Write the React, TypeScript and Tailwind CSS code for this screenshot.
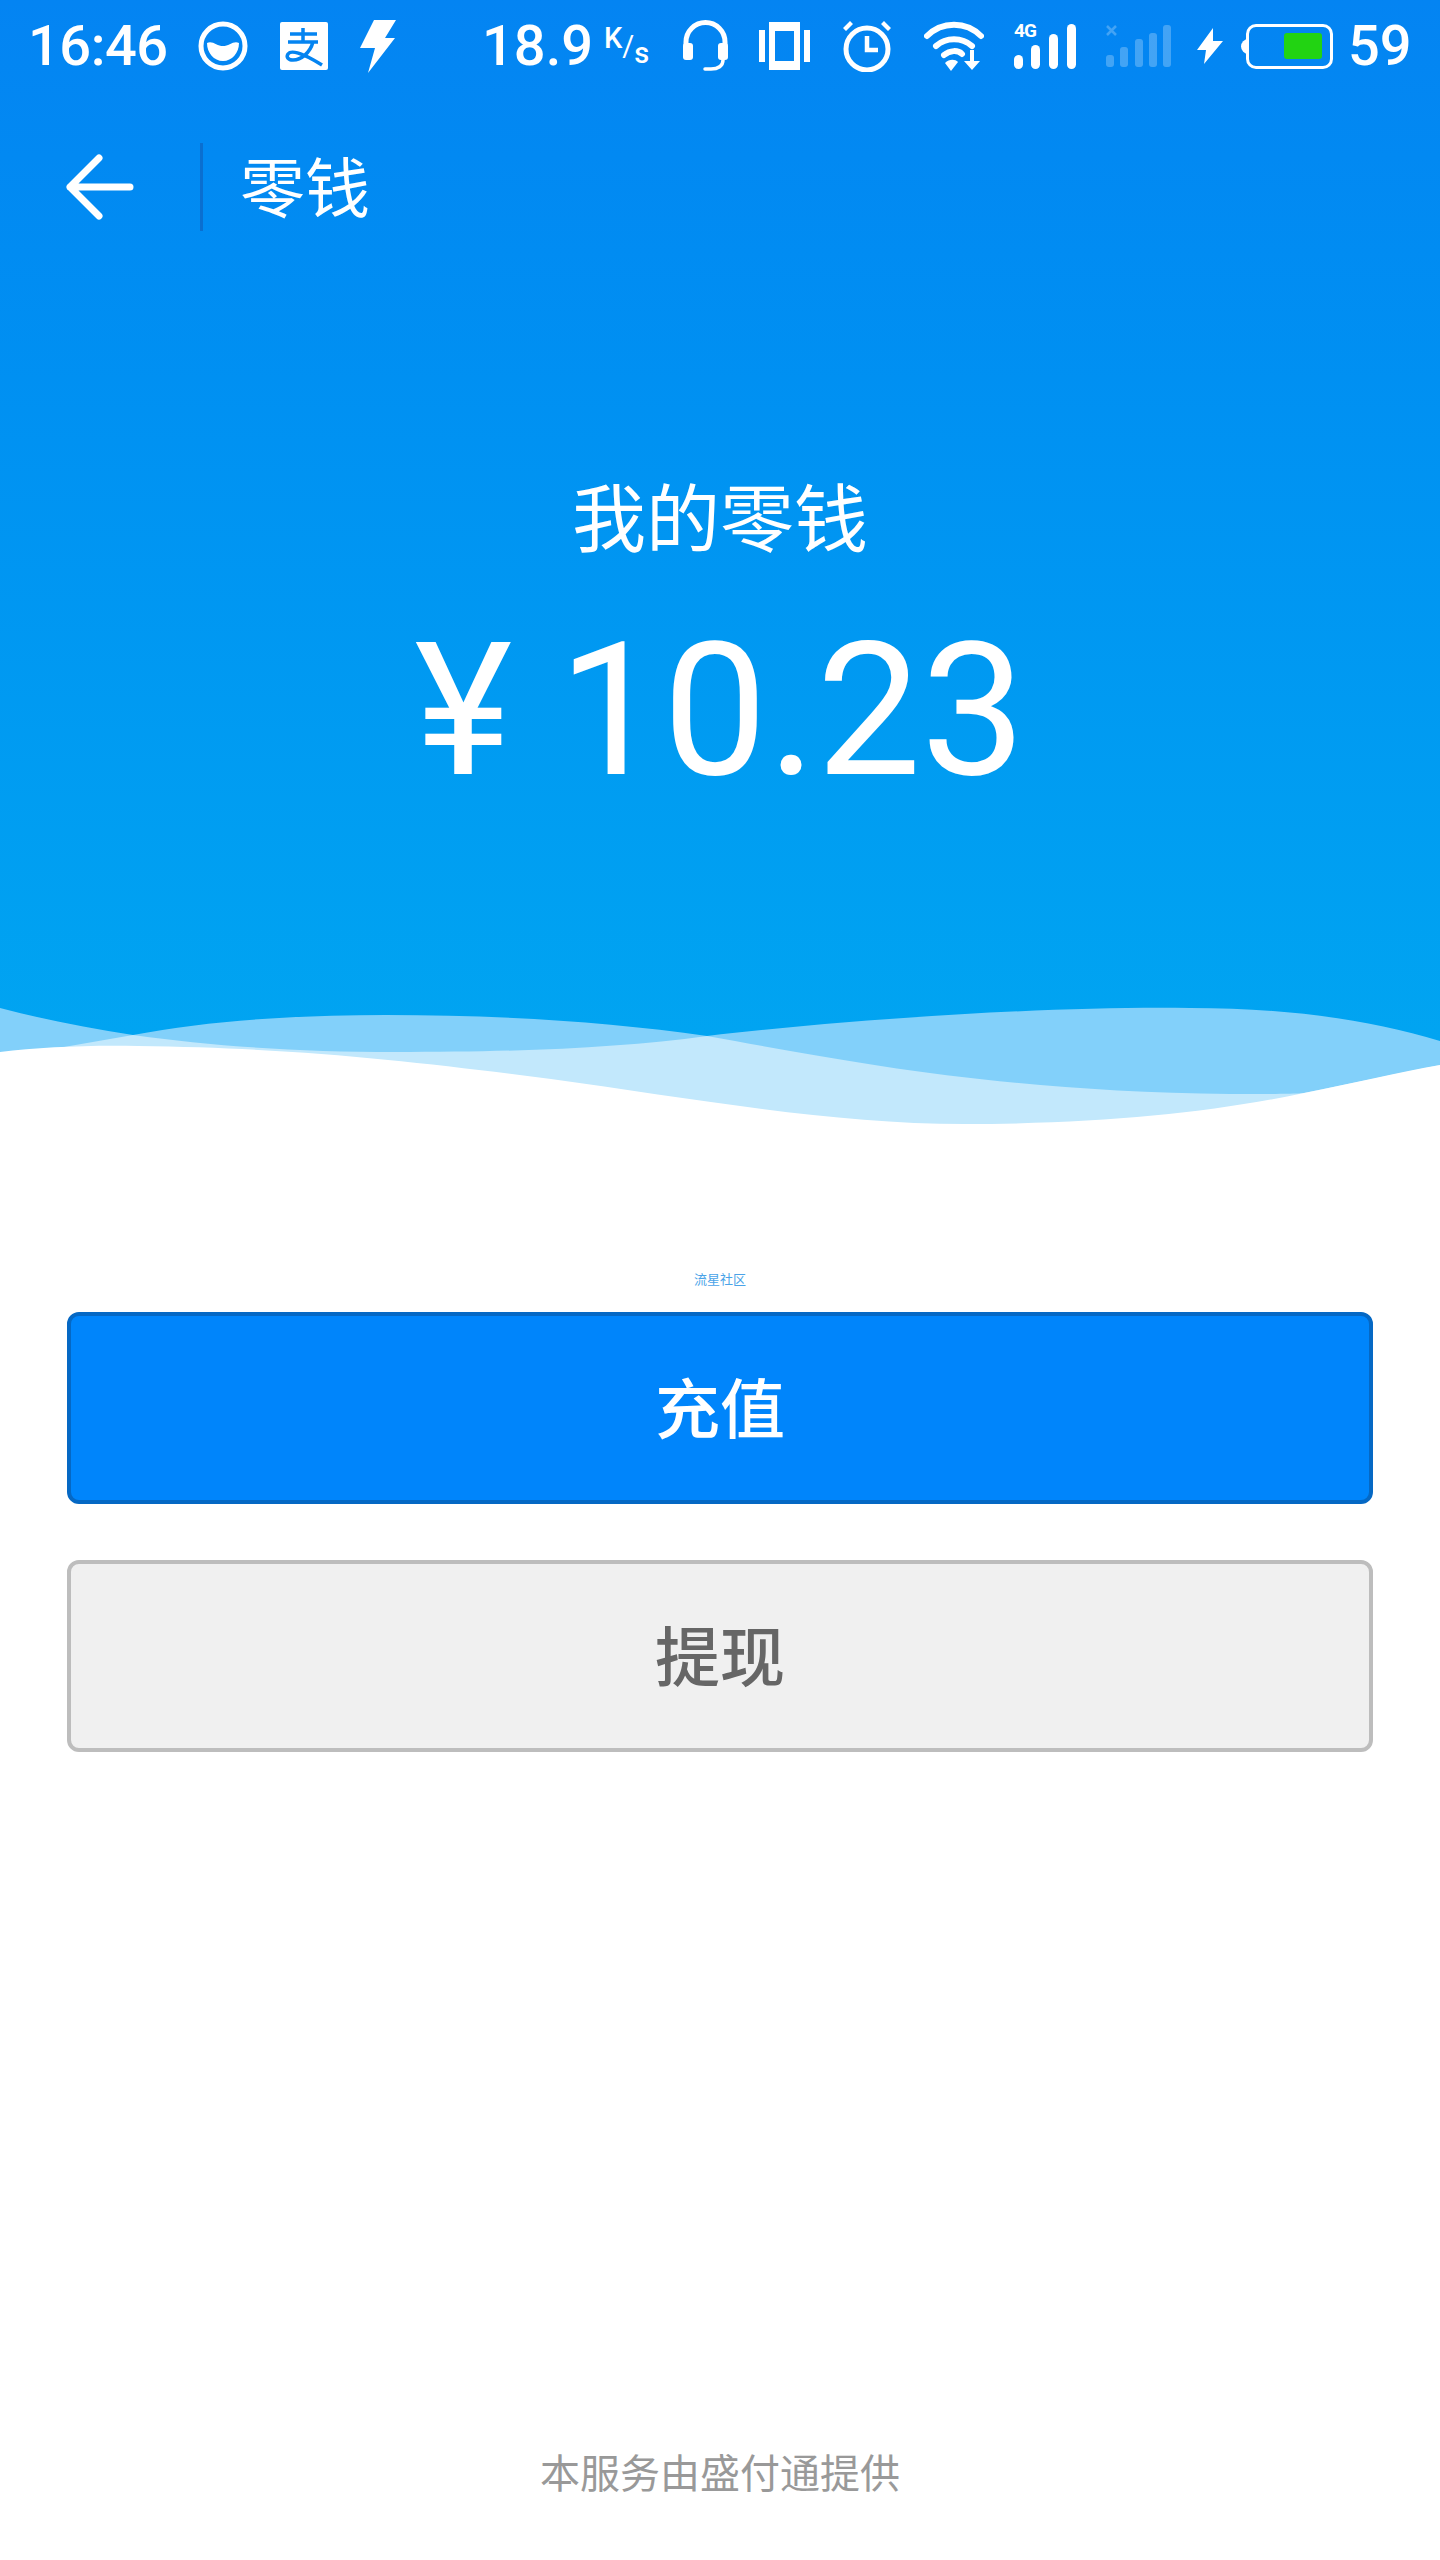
const CJK = '[font-family:Roboto,"Noto_Sans_CJK_SC",sans-serif]';

function StatusIcons() {
  return (
    <>
      {/* round app icon */}
      <svg width="50" height="52" viewBox="0 0 50 52" className="ml-[30px]">
        <circle cx="25" cy="26" r="22" fill="none" stroke="#fff" strokeWidth="5" />
        <path d="M9 23c5-3 10 3 16 3s11-6 16-3c0 10-7 18-16 18S9 33 9 23z" fill="#fff" />
      </svg>
      {/* alipay */}
      <svg width="48" height="48" viewBox="0 0 48 48" className="ml-[32px]">
        <path d="M2 0h44a2 2 0 0 1 2 2v44a2 2 0 0 1-2 2H2a2 2 0 0 1-2-2V2a2 2 0 0 1 2-2z" fill="#fff" />
        <path d="M23 6v13M10 12h27M8 20h30M33 20c-3 11-12 18-20 18-5 0-7-3-5-6 3-4 13-2 34 11" fill="none" stroke="#0484f1" strokeWidth="3.5" />
      </svg>
      {/* bolt */}
      <svg width="36" height="53" viewBox="0 0 36 53" className="ml-[32px]">
        <path d="M14 0h22L25 18h10L8 53l7-25H0z" fill="#fff" />
      </svg>
    </>
  );
}

function RightIcons() {
  return (
    <>
      {/* headset */}
      <svg width="49" height="54" viewBox="0 0 49 54" className="ml-[29px]">
        <path d="M5 26V23a19.500 19.500 0 0 1 39 0v3" fill="none" stroke="#fff" strokeWidth="5" />
        <rect x="2" y="24" width="10" height="17" rx="3" fill="#fff" />
        <rect x="37" y="24" width="10" height="17" rx="3" fill="#fff" />
        <path d="M42 41c0 6-5 9-12 9h-6" fill="none" stroke="#fff" strokeWidth="3.500" strokeLinecap="round" />
      </svg>
      {/* vibrate */}
      <svg width="51" height="48" viewBox="0 0 51 48" className="ml-[29px]">
        <path d="M10 0h31v48H10zM16 9v30h19V9z" fill="#fff" fillRule="evenodd" />
        <rect x="0" y="8" width="6" height="32" fill="#fff" />
        <rect x="45" y="8" width="6" height="32" fill="#fff" />
      </svg>
      {/* alarm */}
      <svg width="50" height="52" viewBox="0 0 50 52" className="ml-[32px]">
        <circle cx="25" cy="29" r="21" fill="none" stroke="#fff" strokeWidth="5" />
        <path d="M25 16v14h11" fill="none" stroke="#fff" strokeWidth="4.5" />
        <path d="M1 8l7-7 3 3-7 7zM49 8l-7-7-3 3 7 7z" fill="#fff" />
      </svg>
      {/* wifi */}
      <svg width="60" height="50" viewBox="0 0 60 50" className="ml-[32px]">
        <path d="M3 15c15-15 39-15 54 0M12 25c10-9 26-9 36 0M20 34c6-5 14-5 18-1" fill="none" stroke="#fff" strokeWidth="6" strokeLinecap="round" />
        <path d="M21 42c4-4 10-4 13-1l-7 9z" fill="#fff" />
        <path d="M50 29v11h6l-8 9-8-9h6V29z" fill="#fff" />
      </svg>
      {/* 4G signal */}
      <div className="relative ml-[30px] h-[45px] w-[62px]">
        <span className="absolute top-[-2px] left-0 font-['Roboto'] text-[19px] leading-[18px] font-bold tracking-[-1px] text-white">4G</span>
        <svg width="62" height="45" viewBox="0 0 62 45" className="block">
          <rect x="0" y="31" width="9" height="14" rx="4.5" fill="#fff" />
          <rect x="17" y="21" width="9" height="24" rx="4.5" fill="#fff" />
          <rect x="35" y="10" width="9" height="35" rx="4.5" fill="#fff" />
          <rect x="53" y="0" width="9" height="45" rx="4.5" fill="#fff" />
        </svg>
      </div>
      {/* empty sim signal */}
      <svg width="65" height="42" viewBox="0 0 65 42" className="ml-[30px] opacity-25">
        <path d="M1 1l9 9M10 1l-9 9" stroke="#fff" strokeWidth="2.5" />
        <rect x="0" y="30" width="8" height="12" rx="3" fill="#fff" />
        <rect x="14" y="22" width="8" height="20" rx="3" fill="#fff" />
        <rect x="29" y="14" width="8" height="28" rx="3" fill="#fff" />
        <rect x="43" y="8" width="8" height="34" rx="3" fill="#fff" />
        <rect x="57" y="0" width="8" height="42" rx="3" fill="#fff" />
      </svg>
      {/* charging */}
      <svg width="26" height="36" viewBox="0 0 26 36" className="ml-[26px]">
        <path d="M16 0L0 22h9L7 36 26 13h-10z" fill="#fff" />
      </svg>
      {/* battery */}
      <div className="relative ml-[18px] flex h-[45px] w-[92px] items-center">
        <div className="absolute top-[15px] left-0 h-[15px] w-[8px] rounded-l-full bg-white" />
        <div className="ml-[5px] flex h-full flex-1 items-center justify-end rounded-[10px] border-[3px] border-white pr-[8px]">
          <div className="h-[26px] w-[38px] rounded-[3px] bg-[#22d312]" />
        </div>
      </div>
    </>
  );
}

function Wave() {
  return (
    <svg viewBox="0 0 1440 130" preserveAspectRatio="none" className="absolute right-0 bottom-0 left-0 h-[130px] w-full">
      <path
        d="M0 8C45 20 90 28 133 35C210 20 300 15 386 15C500 15 610 22 707 36C860 18 1060 6 1190 8C1290 8 1370 20 1440 41V130H0Z"
        fill="#82d0fa"
      />
      <path
        d="M0 60L64 47L133 35C210 46 300 52 395 52C520 52 620 48 707 36C840 60 1000 92 1230 94C1270 94 1290 94 1304 93L1440 65V130H0Z"
        fill="#c2e8fc"
      />
      <path
        d="M0 52C40 47 90 45 138 46C300 48 420 62 551 79C690 98 830 124 964 124C1100 124 1210 113 1304 93C1350 84 1400 72 1440 65V130H0Z"
        fill="#fff"
      />
    </svg>
  );
}

export default function App() {
  return (
    <div className={`flex h-[2560px] flex-col bg-white ${CJK}`}>
      <div className="relative h-[1130px] bg-gradient-to-b from-[#0484f2] to-[#02a7f1] text-white">
        {/* status bar */}
        <div className="flex h-[92px] items-center pl-[28px]">
          <span className="w-[140px] text-[56px] leading-none font-medium tracking-[-0.5px]">16:46</span>
          <StatusIcons />
          <span className="ml-[86px] w-[110px] text-[56px] leading-none font-medium">18.9</span>
          <span className="ml-[12px] flex h-[44px] w-[48px] text-[29px] leading-none font-medium">
            <span className="self-start">K</span>
            <span className="self-center font-normal">/</span>
            <span className="self-end">s</span>
          </span>
          <RightIcons />
          <span className="ml-[15px] text-[56px] leading-none font-medium">59</span>
        </div>

        {/* toolbar */}
        <div className="mt-[49px] flex h-[92px] items-center">
          <svg width="68" height="66" viewBox="0 0 68 66" className="ml-[66px]">
            <path d="M33 4L4 33l29 29M4 33h60" fill="none" stroke="#fff" strokeWidth="7" strokeLinecap="round" strokeLinejoin="round" />
          </svg>
          <div className="ml-[66px] h-[88px] w-[3px] bg-[#0a6fd0]" />
          <h1 className="ml-[37px] pt-[6px] text-[65px] leading-none font-normal">零钱</h1>
        </div>

        <div className="mt-[238px] flex flex-col items-center">
          <p className="text-[74px] leading-[100px] font-normal">我的零钱</p>
          <p className="mt-[39px] text-[186px] leading-[200px] font-normal">¥ 10.23</p>
        </div>

        <Wave />
      </div>

      <div className="flex flex-1 flex-col items-center px-[67px]">
        <p className="mt-[142px] text-[13px] leading-[16px] text-[#4aa3e8]">流星社区</p>
        <button className="mt-[24px] h-[192px] w-full rounded-[12px] border-[4px] border-[#0568c4] bg-[#0085fb] pt-[8px] text-[65px] font-medium text-white">
          充值
        </button>
        <button className="mt-[56px] h-[192px] w-full rounded-[12px] border-[4px] border-[#bdbdbd] bg-[#f0f0f0] pt-[8px] text-[65px] font-medium text-[#666666]">
          提现
        </button>
        <p className="mt-auto mb-[61px] text-[40px] leading-[48px] text-[#999999]">本服务由盛付通提供</p>
      </div>
    </div>
  );
}
